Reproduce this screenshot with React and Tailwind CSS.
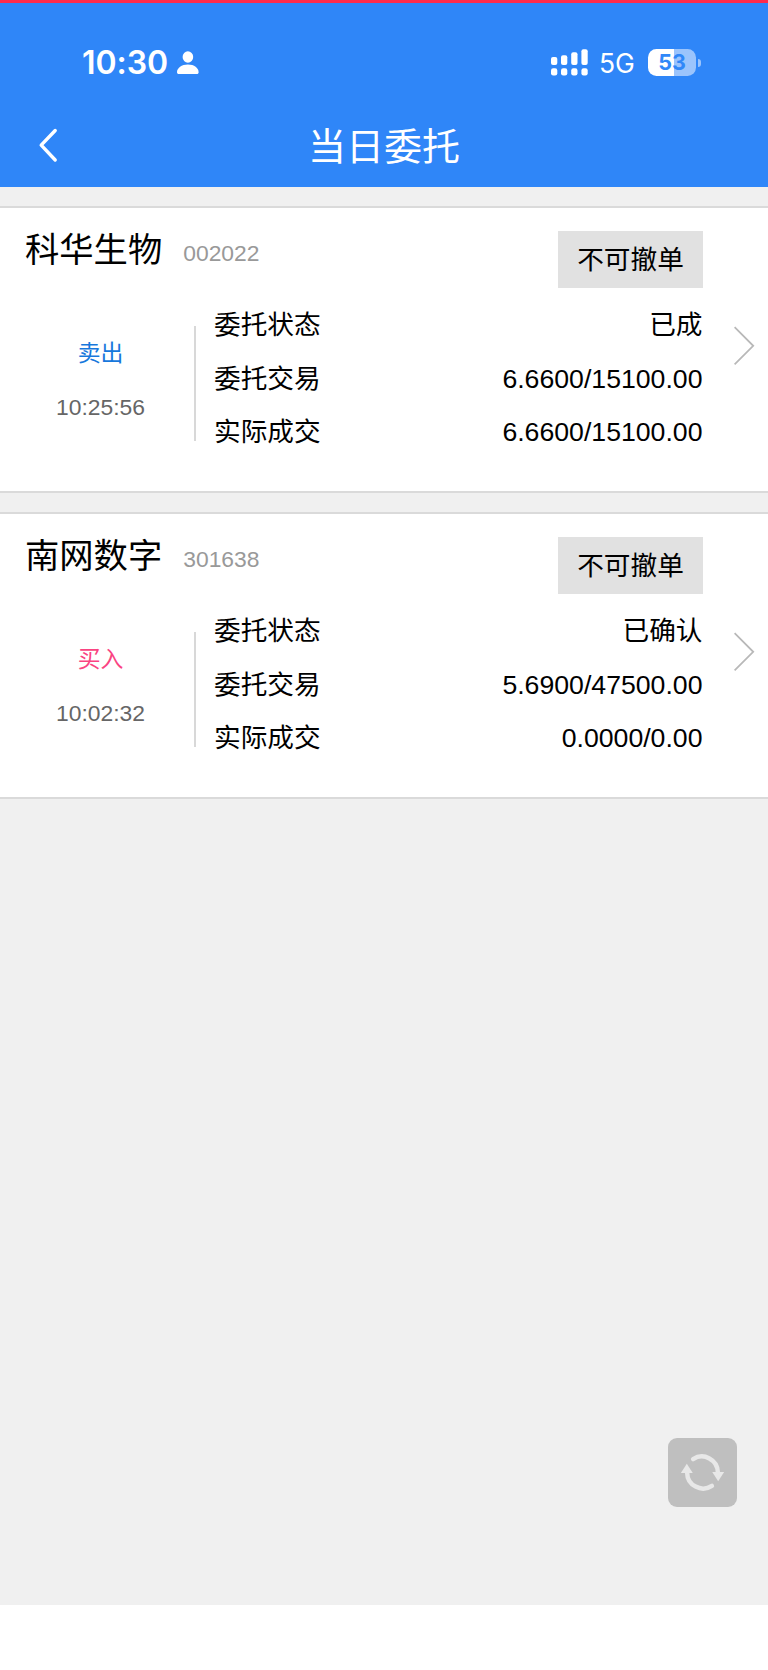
const orders = [
  {
    name: '科华生物',
    code: '002022',
    side: '卖出',
    sideClass: 'text-[#1778dc]',
    time: '10:25:56',
    rows: [
      ['委托状态', '已成'],
      ['委托交易', '6.6600/15100.00'],
      ['实际成交', '6.6600/15100.00'],
    ],
  },
  {
    name: '南网数字',
    code: '301638',
    side: '买入',
    sideClass: 'text-[#fa4482]',
    time: '10:02:32',
    rows: [
      ['委托状态', '已确认'],
      ['委托交易', '5.6900/47500.00'],
      ['实际成交', '0.0000/0.00'],
    ],
  },
];

function StatusBar() {
  return (
    <div className="flex h-[118px] items-center pl-[82px] pr-[67px] pt-px font-['Inter','Liberation_Sans',sans-serif] text-white">
      <span className="w-[89px] whitespace-nowrap pt-px text-[32px] font-semibold leading-none tracking-[-0.05px]">10:30</span>
      <svg className="ml-[6px] h-[24px] w-[22px]" viewBox="0 0 22 24" fill="currentColor">
        <ellipse cx="10.9" cy="6" rx="5.3" ry="5.8" />
        <path d="M2 23C.6 23 0 22.4 0 21C0 17.2 4.6 13.6 10.9 13.6S21.6 17.2 21.6 21C21.6 22.4 21 23 19.7 23Z" />
      </svg>
      <svg className="ml-auto h-[27px] w-[37px]" viewBox="0 0 37 27" fill="currentColor">
        <rect x="0" y="8" width="6.3" height="8" rx="2" />
        <rect x="10" y="6.2" width="6.3" height="9.8" rx="2" />
        <rect x="20.2" y="3.2" width="6.3" height="12.8" rx="2" />
        <rect x="30.4" y="0.2" width="6.3" height="15.8" rx="2" />
        <rect x="0" y="19.3" width="6.3" height="7.2" rx="2.2" />
        <rect x="10" y="19.3" width="6.3" height="7.2" rx="2.2" />
        <rect x="20.2" y="19.3" width="6.3" height="7.2" rx="2.2" />
        <rect x="30.4" y="19.3" width="6.3" height="7.2" rx="2.2" />
      </svg>
      <span className="ml-[11px] w-[37px] whitespace-nowrap pt-[2px] text-[26.5px] leading-none tracking-[-0.1px]">5G</span>
      <div className="ml-[12px] flex h-[27px] w-[48px] items-center justify-center rounded-[8.5px] bg-[linear-gradient(90deg,#fff_54%,#9bc4fc_54%)] pt-px text-[21.5px] font-bold leading-none text-[#3088f8]">
        <span>53</span>
      </div>
      <div className="ml-[2px] h-[8px] w-[3px] rounded-r-full bg-[#9bc4fc]" />
    </div>
  );
}

function OrderCard({ order }) {
  return (
    <section className="flex h-[287px] border-y-2 border-[#dadada] bg-white">
      <div className="flex w-[703px] flex-col">
        <div className="flex h-[90px] items-start pl-[25px]">
          <h2 className="pt-[20px] text-[34.3px] leading-[44px]">{order.name}</h2>
          <span className="pl-[21px] pt-[23px] text-[22.86px] leading-[44px] text-[#999]">{order.code}</span>
          <button className="ml-auto mt-[23px] h-[57px] w-[145px] bg-[#e1e1e1] pt-[2px] text-[26.67px] leading-[55px]">不可撤单</button>
        </div>
        <div className="flex">
          <div className="mt-[28px] flex h-[115px] w-[196px] flex-col border-r-2 border-[#d8d8d8] pl-[7px] pt-px text-center text-[22.86px] leading-[53.5px]">
            <span className={order.sideClass}>{order.side}</span>
            <span className="text-[#666]">{order.time}</span>
          </div>
          <dl className="flex flex-1 flex-col pl-[18px] pr-[0.5px] pt-px text-[26.67px] leading-[53.5px]">
            {order.rows.map(([label, value]) => (
              <div key={label} className="flex h-[53.5px] justify-between">
                <dt>{label}</dt>
                <dd>{value}</dd>
              </div>
            ))}
          </dl>
        </div>
      </div>
      <svg className="ml-[31px] mt-[118px] h-[40px] w-[22px]" viewBox="0 0 22 40" fill="none" stroke="#b8b8b8" strokeWidth="1.8">
        <path d="M0.6 1.2L19.2 19.8L0.6 38.4" />
      </svg>
    </section>
  );
}

export default function App() {
  return (
    <div className="relative flex h-[1670px] w-[768px] flex-col overflow-hidden bg-white font-['Liberation_Sans','Noto_Sans_CJK_SC',sans-serif] text-black">
      <header className="h-[187px] border-t-[3px] border-[#ff2b4c] bg-[#2f86f8]">
        <StatusBar />
        <div className="flex h-[48px] items-center">
          <svg className="ml-[38px] h-[36px] w-[20px]" viewBox="0 0 20 36" fill="none" stroke="#fff" strokeWidth="3.4" strokeLinecap="round" strokeLinejoin="round">
            <path d="M17.2 3.5L3.2 18.2L17.2 33" />
          </svg>
          <h1 className="flex-1 pb-[2px] pr-[58px] text-center font-['Noto_Sans_CJK_SC',sans-serif] text-[38px] font-normal leading-[46px] text-white">当日委托</h1>
        </div>
      </header>
      <main className="flex h-[1418px] flex-col gap-[19px] bg-[#f0f0f0] pt-[19px]">
        {orders.map((order) => (
          <OrderCard key={order.code} order={order} />
        ))}
      </main>
      <button className="absolute left-[668px] top-[1438px] size-[69px] rounded-[9px] bg-[#bfbfbf]">
        <svg className="size-full" viewBox="0 0 209 209" fill="none">
          <path d="M76 64A48.5 48.5 0 0 1 151 104" stroke="#e8e8e8" strokeWidth="13.5" strokeLinecap="round" />
          <path d="M134 103H170L152 131Z" fill="#e8e8e8" />
          <g transform="rotate(180 104.5 104.5)">
            <path d="M76 64A48.5 48.5 0 0 1 151 104" stroke="#e8e8e8" strokeWidth="13.5" strokeLinecap="round" />
            <path d="M134 103H170L152 131Z" fill="#e8e8e8" />
          </g>
        </svg>
      </button>
    </div>
  );
}
